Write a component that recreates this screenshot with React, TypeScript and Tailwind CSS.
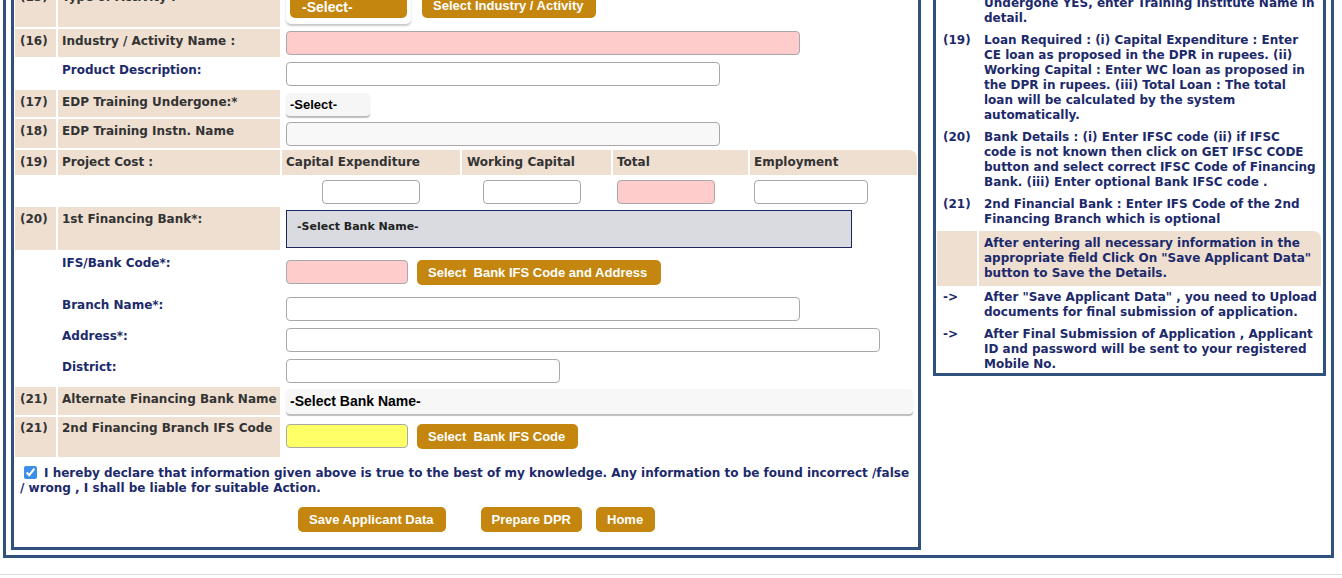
import React from "react";

// ── Shared styles ─────────────────────────────────────────────────────────────

const tan = "bg-[#eedfd1]";
const navy = "text-[#1c2a6b]";
const gray = "text-[#333333]";
const verdana = "font-['DejaVu_Sans',Verdana,sans-serif]";
const arial = "font-['Liberation_Sans',Arial,sans-serif]";

function GoldButton({ children, className = "" }: { children: React.ReactNode; className?: string }) {
  return (
    <button
      type="button"
      className={`${arial} h-[25px] shrink-0 whitespace-nowrap rounded-[5px] bg-[#c4860e] px-[11px] text-[13px] font-bold text-white ${className}`}
    >
      {children}
    </button>
  );
}

function TextBox({ w, bg = "bg-white", className = "" }: { w: string; bg?: string; className?: string }) {
  return <input type="text" className={`h-[24px] ${w} ${bg} rounded-[4px] border border-[#a8a8a8] ${className}`} />;
}

function Row({
  num,
  label,
  shaded = false,
  h,
  pt = "pt-[5px]",
  fieldPt = "pt-[3px]",
  children,
}: {
  num?: string;
  label: string;
  shaded?: boolean;
  h: string;
  pt?: string;
  fieldPt?: string;
  children?: React.ReactNode;
}) {
  return (
    <div className={`flex gap-[2px] ${h}`}>
      <div className={`w-[41px] shrink-0 pl-[5px] ${pt} ${shaded ? tan : ""} ${gray}`}>{num}</div>
      <div className={`w-[222px] shrink-0 whitespace-nowrap pl-[4px] ${pt} ${shaded ? `${tan} ${gray}` : navy}`}>
        {label}
      </div>
      <div className={`flex flex-1 items-start pl-[4px] ${fieldPt}`}>{children}</div>
    </div>
  );
}

// ── Right-hand help notes ─────────────────────────────────────────────────────

const notes: { num: string; lines: string[] }[] = [
  {
    num: "(18)",
    lines: ["EDP Training Instn. Name : If EDP Training", "Undergone YES, enter Training Institute Name in", "detail."],
  },
  {
    num: "(19)",
    lines: [
      "Loan Required : (i) Capital Expenditure : Enter",
      "CE loan as proposed in the DPR in rupees. (ii)",
      "Working Capital : Enter WC loan as proposed in",
      "the DPR in rupees. (iii) Total Loan : The total",
      "loan will be calculated by the system",
      "automatically.",
    ],
  },
  {
    num: "(20)",
    lines: [
      "Bank Details : (i) Enter IFSC code (ii) if IFSC",
      "code is not known then click on GET IFSC CODE",
      "button and select correct IFSC Code of Financing",
      "Bank. (iii) Enter optional Bank IFSC code .",
    ],
  },
  {
    num: "(21)",
    lines: ["2nd Financial Bank : Enter IFS Code of the 2nd", "Financing Branch which is optional"],
  },
];

const arrows: string[][] = [
  ["After \"Save Applicant Data\" , you need to Upload", "documents for final submission of application."],
  ["After Final Submission of Application , Applicant", "ID and password will be sent to your registered", "Mobile No."],
];

function Lines({ lines }: { lines: string[] }) {
  return (
    <>
      {lines.map((l, i) => (
        <div key={i} className="whitespace-nowrap">
          {l}
        </div>
      ))}
    </>
  );
}

function HelpPanel() {
  return (
    <div className={`w-[393px] shrink-0 border-[3px] border-[#30507d] pb-0 pl-[1px] pr-[2px] ${navy}`}>
      {notes.map((n) => (
        <div key={n.num} className="flex gap-[2px] py-[3.5px]">
          <div className="w-[40px] shrink-0 pl-[6px]">{n.num}</div>
          <div className="flex-1 pl-[5px]">
            <Lines lines={n.lines} />
          </div>
        </div>
      ))}
      <div className="mt-[1px] flex gap-[2px]">
        <div className={`w-[40px] shrink-0 ${tan}`} />
        <div className={`flex-1 rounded-tr-[8px] pb-[5.5px] pl-[5px] pt-[4.5px] ${tan}`}>
          <Lines
            lines={[
              "After entering all necessary information in the",
              "appropriate field Click On \"Save Applicant Data\"",
              "button to Save the Details.",
            ]}
          />
        </div>
      </div>
      {arrows.map((a, i) => (
        <div key={i} className={`flex gap-[2px] ${i === 0 ? "pb-[3.5px] pt-[4px]" : "pb-[1px] pt-[3.5px]"}`}>
          <div className="w-[40px] shrink-0 pl-[6px]">-&gt;</div>
          <div className="flex-1 pl-[5px]">
            <Lines lines={a} />
          </div>
        </div>
      ))}
    </div>
  );
}

// ── Main form ─────────────────────────────────────────────────────────────────

function ApplicantForm() {
  return (
    <div className="w-[910px] shrink-0 border-[3px] border-[#30507d] px-[1px] pb-[15px] pt-[8px]">
      <div className="flex flex-col gap-[2px]">
        <Row num="(15)" label="Type of Activity :" shaded h="h-[42px]" fieldPt="pt-[7px]">
          <div className="w-[125px] rounded-[5px] bg-white p-[4px] pb-[6px] shadow-[0_2px_2px_#c8c8c8]">
            <div className={`${arial} flex h-[22px] items-center rounded-[5px] bg-[#c4860e] pl-[12px] text-[14px] font-bold text-white`}>
              -Select-
            </div>
          </div>
          <GoldButton className="ml-[11px] mt-[1px] pr-[12px]">Select Industry / Activity</GoldButton>
        </Row>

        <Row num="(16)" label="Industry / Activity Name :" shaded h="h-[28px]" fieldPt="pt-[2px]">
          <TextBox w="w-[514px]" bg="bg-[#ffcccc]" />
        </Row>

        <Row label="Product Description:" h="h-[29px]" pt="pt-[3.5px]">
          <TextBox w="w-[434px]" />
        </Row>

        <Row num="(17)" label="EDP Training Undergone:*" shaded h="h-[27px]" fieldPt="pt-[3px]">
          <div className={`${arial} flex h-[23px] w-[84px] items-center rounded-[4px] bg-[#f6f6f6] pl-[4px] text-[13px] font-bold text-black shadow-[0_2px_1px_#bdbdbd]`}>
            -Select-
          </div>
        </Row>

        <Row num="(18)" label="EDP Training Instn. Name" shaded h="h-[29px]">
          <TextBox w="w-[434px]" bg="bg-[#f8f8f8]" />
        </Row>

        {/* Project cost header */}
        <div className="flex h-[25px] gap-[2px]">
          <div className={`w-[41px] shrink-0 pl-[5px] pt-[5px] ${tan} ${gray}`}>(19)</div>
          <div className={`w-[222px] shrink-0 pl-[4px] pt-[5px] ${tan} ${gray}`}>Project Cost :</div>
          <div className={`w-[178px] shrink-0 pl-[4px] pt-[5px] ${tan} ${gray}`}>Capital Expenditure</div>
          <div className={`w-[149px] shrink-0 pl-[5px] pt-[5px] ${tan} ${gray}`}>Working Capital</div>
          <div className={`w-[135px] shrink-0 pl-[4px] pt-[5px] ${tan} ${gray}`}>Total</div>
          <div className={`flex-1 rounded-tr-[8px] pl-[4px] pt-[5px] ${tan} ${gray}`}>Employment</div>
        </div>
        <div className="flex h-[28px] gap-[2px] pt-[3px]">
          <div className="w-[41px] shrink-0" />
          <div className="w-[222px] shrink-0" />
          <div className="w-[178px] shrink-0 pl-[40px]">
            <TextBox w="w-[98px]" />
          </div>
          <div className="w-[149px] shrink-0 pl-[21px]">
            <TextBox w="w-[98px]" />
          </div>
          <div className="w-[135px] shrink-0 pl-[4px]">
            <TextBox w="w-[98px]" bg="bg-[#ffcccc]" />
          </div>
          <div className="flex-1 pl-[4px]">
            <TextBox w="w-[114px]" />
          </div>
        </div>

        <Row num="(20)" label="1st Financing Bank*:" shaded h="h-[43px]">
          <div className="h-[38px] w-[566px] border border-[#1b2560] bg-[#d9dbe1] pl-[10px] pt-[8px] text-[11px] text-[#222222]">
            -Select Bank Name-
          </div>
        </Row>

        <Row label="IFS/Bank Code*:" h="h-[40px]" pt="pt-[3.5px]" fieldPt="pt-[8px]">
          <TextBox w="w-[122px]" bg="bg-[#ffcccc]" />
          <GoldButton className="ml-[9px] pr-[14px]">Select&nbsp; Bank IFS Code and Address</GoldButton>
        </Row>

        <Row label="Branch Name*:" h="h-[29px]" pt="pt-[3.5px]">
          <TextBox w="w-[514px]" />
        </Row>
        <Row label="Address*:" h="h-[29px]" pt="pt-[3.5px]">
          <TextBox w="w-[594px]" />
        </Row>
        <Row label="District:" h="h-[29px]" pt="pt-[3.5px]">
          <TextBox w="w-[274px]" />
        </Row>

        <Row num="(21)" label="Alternate Financing Bank Name" shaded h="h-[28px]" pt="pt-[5px]" fieldPt="pt-[2px]">
          <div className={`${arial} flex h-[25px] w-[627px] items-center rounded-[4px] bg-[#f7f7f7] pl-[4px] text-[14px] font-bold text-black shadow-[0_2px_1px_#bdbdbd]`}>
            -Select Bank Name-
          </div>
        </Row>

        <Row num="(21)" label="2nd Financing Branch IFS Code" shaded h="h-[40px]" pt="pt-[3.5px]" fieldPt="pt-[7px]">
          <TextBox w="w-[122px]" bg="bg-[#ffff66]" />
          <GoldButton className="ml-[9px] pr-[13px]">Select&nbsp; Bank IFS Code</GoldButton>
        </Row>
      </div>

      <p className={`mt-[8.5px] w-[895px] pl-[5px] leading-[15px] ${navy}`}>
        <input
          type="checkbox"
          defaultChecked
          className="m-0 ml-[4px] mr-[7px] h-[13px] w-[13px] align-[-2px] accent-[#3d8ee8]"
        />
        I hereby declare that information given above is true to the best of my knowledge. Any information to be found incorrect /false
        <br />/ wrong , I shall be liable for suitable Action.
      </p>

      <div className="mt-[11px] flex pl-[283px]">
        <GoldButton className="pr-[12px]">Save Applicant Data</GoldButton>
        <GoldButton className="ml-[35px] px-[10px] pr-[11px]">Prepare DPR</GoldButton>
        <GoldButton className="ml-[14px] pr-[12px]">Home</GoldButton>
      </div>
    </div>
  );
}

export default function App() {
  return (
    <div className={`h-[578px] overflow-hidden bg-white ${verdana} text-[12px] font-bold leading-[15px]`}>
      <div className="ml-[3px] mt-[-34px] flex w-[1331px] items-start gap-[12px] border-[3px] border-[#30507d] p-[5px]">
        <ApplicantForm />
        <HelpPanel />
      </div>
      <div className="mt-[16px] h-px bg-[#dddddd]" />
    </div>
  );
}
